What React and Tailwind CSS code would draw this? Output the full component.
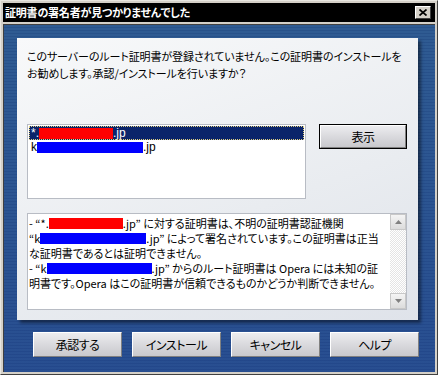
import React from 'react';

const jp = {
    fontFamily: '"Noto Sans CJK JP", "Liberation Sans", sans-serif',
};

function Btn({ children, isDefault = false, className = '' }) {
    return (
        <div
            className={`h-[25px] ${isDefault ? 'border border-black' : ''} ${className}`}
        >
            <div className="h-full w-full flex items-center justify-center border border-t-[#ffffff] border-l-[#ffffff] border-r-[#808080] border-b-[#808080] bg-[linear-gradient(to_bottom,#ececef,#d6d6da_60%,#c9c9cd)] text-[12px] text-black [font-feature-settings:'palt'] tracking-[-0.5px]">
                {children}
            </div>
        </div>
    );
}

function Arrow({ up }) {
    return (
        <div className="w-[16px] h-[16px] flex items-center justify-center bg-[linear-gradient(to_bottom,#f4f4f4,#dcdcdc)] border border-[#c8c8c8]">
            <svg width="7" height="4" viewBox="0 0 7 4">
                {up ? (
                    <polygon points="3.5,0 7,4 0,4" fill="#808080" />
                ) : (
                    <polygon points="0,0 7,0 3.5,4" fill="#808080" />
                )}
            </svg>
        </div>
    );
}

export default function App() {
    return (
        <div
            className="w-[438px] h-[375px] bg-[#d4d0c8] border border-t-[#e8e6e0] border-l-[#e8e6e0] border-r-[#404040] border-b-[#404040] flex flex-col p-[2px]"
            style={jp}
        >
            {/* Title bar */}
            <div className="h-[19px] bg-black flex items-center justify-between pl-[2px] pr-[4px] shrink-0">
                <span className="text-white text-[11px] font-bold leading-none tracking-[-0.2px] [font-feature-settings:'palt']">
                    証明書の署名者が見つかりませんでした
                </span>
                <div className="w-[16px] h-[13px] bg-[#d4d0c8] border border-t-white border-l-white border-r-[#404040] border-b-[#404040] flex items-center justify-center">
                    <svg width="8" height="7" viewBox="0 0 8 7">
                        <path d="M0.5 0.5 L7.5 6.5 M7.5 0.5 L0.5 6.5" stroke="#000" strokeWidth="1.7" />
                    </svg>
                </div>
            </div>

            {/* Body */}
            <div className="mt-[2px] flex-1 border-t border-l border-[#404040] bg-[repeating-linear-gradient(to_bottom,#2f5b92_0px,#2f5b92_2px,#28528a_2px,#28528a_3px)] flex flex-col">
                <div className="flex-1 flex flex-col bg-[linear-gradient(to_bottom,rgba(0,0,0,0),rgba(20,40,140,0.25))]">
                    {/* Panel */}
                    <div className="mt-[13px] ml-[13px] w-[401px] h-[282px] bg-[linear-gradient(160deg,#f8f9fa,#e9ecf0_60%,#dfe3ea)] shadow-[3px_3px_3px_rgba(0,0,0,0.45)] p-[10px] pr-[11px] flex flex-col">
                        <p className="text-[11px] leading-[17px] text-black whitespace-nowrap tracking-[-0.1px] [font-feature-settings:'palt']">
                            このサーバーのルート証明書が登録されていません。この証明書のインストールを
                            <br />
                            お勧めします。承認/インストールを行いますか？
                        </p>

                        <div className="mt-[42px] flex items-start">
                            {/* List box */}
                            <div
                                className="w-[279px] h-[75px] bg-white border border-[#b8bcc4] text-[12px] leading-[14px] p-[1px]"
                                style={{ fontFamily: '"Liberation Sans", sans-serif' }}
                            >
                                <div className="h-[14px] bg-[#0a246a] text-white flex items-center pl-[2px] outline outline-1 outline-dotted outline-[#e0d080] -outline-offset-1">
                                    <span>*.</span>
                                    <span className="inline-block w-[74px] h-[11px] bg-[#ff0000]" />
                                    <span>.jp</span>
                                </div>
                                <div className="h-[14px] text-black flex items-center pl-[2px]">
                                    <span>k</span>
                                    <span className="inline-block w-[106px] h-[11px] bg-[#0000ff]" />
                                    <span>.jp</span>
                                </div>
                            </div>
                            <Btn isDefault className="ml-auto w-[88px]">表示</Btn>
                        </div>

                        {/* Details box */}
                        <div className="mt-[14px] h-[97px] w-[380px] bg-white border border-[#b8bcc4] flex">
                            <div className="flex-1 pl-[1px] pt-[2px] text-[11px] leading-[15px] text-black whitespace-nowrap [font-feature-settings:'palt']">
                                <div className="flex items-center h-[15px]">
                                    <span className="whitespace-pre">- “*.</span>
                                    <span className="inline-block w-[74px] h-[11px] bg-[#ff0000]" />
                                    <span className="whitespace-pre">.jp” に対する証明書は、不明の証明書認証機関</span>
                                </div>
                                <div className="flex items-center h-[15px]">
                                    <span>“k</span>
                                    <span className="inline-block w-[106px] h-[11px] bg-[#0000ff]" />
                                    <span className="whitespace-pre">.jp” によって署名されています。この証明書は正当</span>
                                </div>
                                <div className="h-[15px]">な証明書であるとは証明できません。</div>
                                <div className="flex items-center h-[15px]">
                                    <span className="whitespace-pre">- “k</span>
                                    <span className="inline-block w-[105px] h-[11px] bg-[#0000ff]" />
                                    <span className="whitespace-pre">.jp” からのルート証明書は Opera には未知の証</span>
                                </div>
                                <div className="h-[15px] whitespace-pre">明書です。Opera はこの証明書が信頼できるものかどうか判断できません。</div>
                            </div>
                            {/* Scrollbar */}
                            <div className="w-[16px] flex flex-col bg-[repeating-conic-gradient(#e4e4e4_0_25%,#ffffff_0_50%)] bg-[length:2px_2px]">
                                <Arrow up />
                                <div className="flex-1" />
                                <Arrow />
                            </div>
                        </div>
                    </div>

                    {/* Buttons */}
                    <div className="mt-[12px] pl-[29px] flex gap-[10px]">
                        <Btn className="w-[89px]">承認する</Btn>
                        <Btn className="w-[89px]">インストール</Btn>
                        <Btn className="w-[89px]">キャンセル</Btn>
                        <Btn className="w-[89px]">ヘルプ</Btn>
                    </div>
                </div>
            </div>
        </div>
    );
}
